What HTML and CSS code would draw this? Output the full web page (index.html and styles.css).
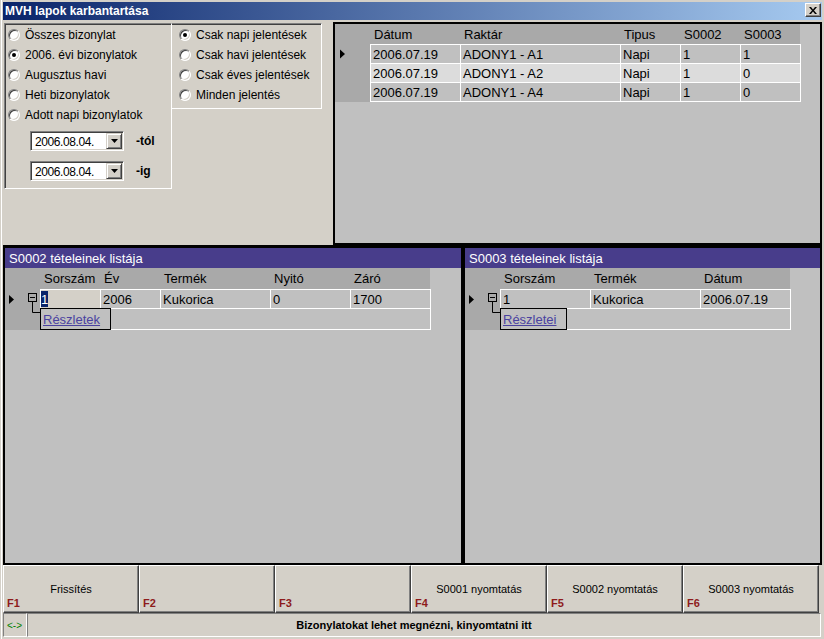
FILE: index.html
```html
<!DOCTYPE html>
<html lang="hu">
<head>
<meta charset="utf-8">
<title>MVH lapok karbantartása</title>
<link rel="stylesheet" href="styles.css">
</head>
<body>
<div class="window">
  <div class="titlebar">
    <span class="title">MVH lapok karbantartása</span>
    <span class="close"><svg width="8" height="7" viewBox="0 0 8 7"><path d="M0 0h2l2 2.5 2-2.5h2l-3 3.5 3 3.5h-2l-2-2.5-2 2.5h-2l3-3.5z" fill="#000"/></svg></span>
  </div>

  <div class="top">
    <div class="filters">
      <div class="group g1">
        <div class="radio"><span class="rb"></span>Összes bizonylat</div>
        <div class="radio"><span class="rb on"></span>2006. évi bizonylatok</div>
        <div class="radio"><span class="rb"></span>Augusztus havi</div>
        <div class="radio"><span class="rb"></span>Heti bizonylatok</div>
        <div class="radio"><span class="rb"></span>Adott napi bizonylatok</div>
        <div class="daterow first">
          <div class="combo"><span class="cv">2006.08.04.</span><span class="dd"><svg width="7" height="4" viewBox="0 0 7 4"><path d="M0 0h7l-3.5 4z" fill="#000"/></svg></span></div>
          <b class="dl">-tól</b>
        </div>
        <div class="daterow">
          <div class="combo"><span class="cv">2006.08.04.</span><span class="dd"><svg width="7" height="4" viewBox="0 0 7 4"><path d="M0 0h7l-3.5 4z" fill="#000"/></svg></span></div>
          <b class="dl">-ig</b>
        </div>
      </div>
      <div class="group g2">
        <div class="radio"><span class="rb on"></span>Csak napi jelentések</div>
        <div class="radio"><span class="rb"></span>Csak havi jelentések</div>
        <div class="radio"><span class="rb"></span>Csak éves jelentések</div>
        <div class="radio"><span class="rb"></span>Minden jelentés</div>
      </div>
    </div>

    <div class="panel main">
      <div class="grid">
        <div class="ghead h20">
          <div class="ind"></div>
          <div class="hc w90">Dátum</div>
          <div class="hc w160">Raktár</div>
          <div class="hc w60">Tipus</div>
          <div class="hc w60">S0002</div>
          <div class="hc w60">S0003</div>
        </div>
        <div class="gbody">
          <div class="ind"><svg width="35" height="58" viewBox="0 0 35 58"><polygon points="5,5.5 10,10 5,14.5" fill="#000"/></svg></div>
          <div class="rows">
            <div class="row">
              <div class="dc w90">2006.07.19</div>
              <div class="dc w160">ADONY1 - A1</div>
              <div class="dc w60">Napi</div>
              <div class="dc w60">1</div>
              <div class="dc w60">1</div>
            </div>
            <div class="row alt">
              <div class="dc w90">2006.07.19</div>
              <div class="dc w160">ADONY1 - A2</div>
              <div class="dc w60">Napi</div>
              <div class="dc w60">1</div>
              <div class="dc w60">0</div>
            </div>
            <div class="row">
              <div class="dc w90">2006.07.19</div>
              <div class="dc w160">ADONY1 - A4</div>
              <div class="dc w60">Napi</div>
              <div class="dc w60">1</div>
              <div class="dc w60">0</div>
            </div>
          </div>
        </div>
      </div>
    </div>
  </div>

  <div class="lower">
    <div class="panel sub left">
      <div class="caption">S0002 tételeinek listája</div>
      <div class="grid">
        <div class="ghead h21">
          <div class="ind"></div>
          <div class="hc w60">Sorszám</div>
          <div class="hc w60">Év</div>
          <div class="hc w110">Termék</div>
          <div class="hc w80">Nyitó</div>
          <div class="hc w80">Záró</div>
        </div>
        <div class="gbody">
          <div class="ind">
            <svg width="35" height="41" viewBox="0 0 35 41">
              <polygon points="4,6 9,10.5 4,15" fill="#000"/>
              <rect x="23.5" y="4.5" width="8" height="8" fill="none" stroke="#000"/>
              <line x1="25" y1="8.5" x2="30" y2="8.5" stroke="#000"/>
              <path d="M27.5 12.5V23.5H35" fill="none" stroke="#000"/>
            </svg>
          </div>
          <div class="rows">
            <div class="row">
              <div class="dc w60 sel"><span class="hl">1</span></div>
              <div class="dc w60">2006</div>
              <div class="dc w110">Kukorica</div>
              <div class="dc w80">0</div>
              <div class="dc w80">1700</div>
            </div>
            <div class="detail">
              <span class="link l1">Részletek</span>
            </div>
          </div>
        </div>
      </div>
    </div>

    <div class="panel sub right">
      <div class="caption">S0003 tételeinek listája</div>
      <div class="grid">
        <div class="ghead h21">
          <div class="ind"></div>
          <div class="hc w90">Sorszám</div>
          <div class="hc w110">Termék</div>
          <div class="hc w90">Dátum</div>
        </div>
        <div class="gbody">
          <div class="ind">
            <svg width="35" height="41" viewBox="0 0 35 41">
              <polygon points="4,6 9,10.5 4,15" fill="#000"/>
              <rect x="23.5" y="4.5" width="8" height="8" fill="none" stroke="#000"/>
              <line x1="25" y1="8.5" x2="30" y2="8.5" stroke="#000"/>
              <path d="M27.5 12.5V23.5H35" fill="none" stroke="#000"/>
            </svg>
          </div>
          <div class="rows">
            <div class="row">
              <div class="dc w90">1</div>
              <div class="dc w110">Kukorica</div>
              <div class="dc w90">2006.07.19</div>
            </div>
            <div class="detail">
              <span class="link l2">Részletei</span>
            </div>
          </div>
        </div>
      </div>
    </div>
  </div>

  <div class="buttons">
    <div class="btn"><span class="lbl">Frissítés</span><span class="fk">F1</span></div>
    <div class="btn"><span class="lbl"></span><span class="fk">F2</span></div>
    <div class="btn"><span class="lbl"></span><span class="fk">F3</span></div>
    <div class="btn"><span class="lbl">S0001 nyomtatás</span><span class="fk">F4</span></div>
    <div class="btn"><span class="lbl">S0002 nyomtatás</span><span class="fk">F5</span></div>
    <div class="btn"><span class="lbl">S0003 nyomtatás</span><span class="fk">F6</span></div>
  </div>

  <div class="status">
    <div class="sc sc1">&lt;-&gt;</div>
    <div class="sc sc2">Bizonylatokat lehet megnézni, kinyomtatni itt</div>
  </div>
</div>
</body>
</html>
```

FILE: styles.css
```css
html, body {
  margin: 0;
  padding: 0;
}
body {
  background: #d4d0c8;
  font-family: "Liberation Sans", Arial, sans-serif;
  color: #000;
  overflow: hidden;
}
.window {
  width: 824px;
  height: 639px;
  box-sizing: border-box;
  padding: 2px 2px 2px 3px;
  display: flex;
  flex-direction: column;
  box-shadow: inset 1px 0 0 #d4d0c8, inset 2px 0 0 #fff;
}

/* title bar */
.titlebar {
  height: 18px;
  flex: none;
  background: linear-gradient(90deg, #0a246a, #a6caf0);
  display: flex;
  align-items: flex-start;
  justify-content: space-between;
  padding: 0 1px 0 2px;
  color: #fff;
  font-weight: bold;
  font-size: 12px;
}
.title {
  line-height: 19px;
}
.close {
  margin-top: 1px;
  width: 16px;
  height: 14px;
  box-sizing: border-box;
  background: #d4d0c8;
  border: 1px solid;
  border-color: #fff #404040 #404040 #fff;
  box-shadow: inset -1px -1px 0 #808080;
  display: flex;
  align-items: center;
  justify-content: center;
}
.close svg { display: block; }

/* top section */
.top {
  height: 224px;
  flex: none;
  margin-top: 1px;
  display: flex;
}
.filters {
  width: 330px;
  flex: none;
  display: flex;
  align-items: flex-start;
  padding: 2px 0 0 1px;
  box-sizing: border-box;
}
.group {
  box-sizing: border-box;
  border-top: 1px solid #808080;
  border-right: 1px solid #fff;
  border-bottom: 1px solid #fff;
}
.g1 {
  width: 168px;
  height: 166px;
  border-left: 1px solid #808080;
  box-shadow: inset 1px 1px 0 #404040;
  padding: 1px 0 0 3px;
}
.g2 {
  width: 150px;
  height: 86px;
  box-shadow: inset 0 1px 0 #404040;
  padding: 1px 0 0 7px;
}
.radio {
  display: flex;
  align-items: center;
  gap: 5px;
  height: 20px;
  font-size: 12px;
  white-space: nowrap;
}
.rb {
  width: 12px;
  height: 12px;
  flex: none;
  box-sizing: border-box;
  border-radius: 50%;
  background: #fff;
  border: 1px solid;
  border-color: #808080 #fff #fff #808080;
  box-shadow: inset 1px 1px 0 #404040, inset -1px -1px 0 #d4d0c8;
  display: flex;
  align-items: center;
  justify-content: center;
}
.rb.on::after {
  content: "";
  width: 4px;
  height: 4px;
  border-radius: 50%;
  background: #000;
}
.daterow {
  display: flex;
  align-items: center;
  gap: 12px;
  padding-left: 22px;
  height: 20px;
  margin-top: 10px;
}
.daterow.first {
  margin-top: 6px;
}
.combo {
  width: 94px;
  height: 20px;
  box-sizing: border-box;
  background: #fff;
  border: 1px solid;
  border-color: #808080 #fff #fff #808080;
  box-shadow: inset 1px 1px 0 #404040, inset -1px -1px 0 #d4d0c8;
  padding: 1px 1px 1px 4px;
  display: flex;
  align-items: center;
  justify-content: space-between;
  font-size: 12px;
}
.cv {
  letter-spacing: -0.4px;
  padding-top: 1px;
}
.dd {
  width: 16px;
  height: 16px;
  box-sizing: border-box;
  background: #d4d0c8;
  border: 1px solid;
  border-color: #d4d0c8 #404040 #404040 #d4d0c8;
  box-shadow: inset 1px 1px 0 #fff, inset -1px -1px 0 #808080;
  display: flex;
  align-items: center;
  justify-content: center;
}
.dd svg { display: block; }
.dl {
  font-size: 12px;
  font-weight: bold;
}

/* panels */
.panel {
  border: 2px solid #000;
  background: #c0c0c0;
  box-sizing: border-box;
}
.main {
  flex: 1;
  margin-top: 1px;
}
.lower {
  height: 320px;
  flex: none;
  display: flex;
}
.sub {
  border-top-width: 3px;
}
.left {
  width: 460px;
  flex: none;
}
.right {
  flex: 1;
}
.caption {
  height: 20px;
  background: #483d8b;
  color: #fff;
  font-size: 13px;
  line-height: 21px;
  padding-left: 4px;
  white-space: nowrap;
}

/* grids */
.grid {
  font-size: 13px;
}
.ghead {
  display: flex;
  width: fit-content;
  background: #a9a9a9;
}
.h20 { height: 20px; line-height: 21px; }
.h21 { height: 21px; line-height: 22px; }
.ind {
  width: 35px;
  flex: none;
}
.ind svg { display: block; }
.gbody {
  display: flex;
}
.gbody .ind {
  background: #a9a9a9;
}
.rows {
  border-top: 1px solid #fff;
  border-right: 1px solid #fff;
}
.row {
  display: flex;
  height: 18px;
  border-bottom: 1px solid #fff;
  background: #c0c0c0;
}
.row.alt {
  background: #dcdcdc;
}
.hc {
  box-sizing: border-box;
  padding-left: 4px;
  white-space: nowrap;
}
.dc {
  box-sizing: border-box;
  height: 18px;
  border-left: 1px solid #fff;
  padding: 1px 0 0 2px;
  line-height: 18px;
  white-space: nowrap;
  overflow: hidden;
}
.w60 { width: 60px; }
.w80 { width: 80px; }
.w90 { width: 90px; }
.w110 { width: 110px; }
.w160 { width: 160px; }
.sel {
  background: #d4d0c8;
  padding-left: 0;
  padding-top: 0;
}
.hl {
  display: inline-block;
  background: #0a246a;
  color: #fff;
  line-height: 17px;
  height: 16px;
  vertical-align: top;
  margin-top: 1px;
}
.detail {
  display: flex;
  align-items: flex-start;
  height: 20px;
  border-bottom: 1px solid #fff;
}
.link {
  position: relative;
  height: 20px;
  margin: -1px 0;
  border: 1px solid #000;
  padding: 0 0 0 2px;
  line-height: 21px;
  color: #4a42a0;
  text-decoration: underline;
  box-sizing: content-box;
  white-space: nowrap;
}
.l1 { width: 67px; }
.l2 { width: 63px; }

/* buttons */
.buttons {
  height: 48px;
  flex: none;
  display: flex;
}
.btn {
  width: 136px;
  box-sizing: border-box;
  border: 1px solid;
  border-color: #fff #404040 #404040 #fff;
  box-shadow: inset -1px -1px 0 #808080;
  display: grid;
  grid-template-rows: 1fr auto 1fr;
  font-size: 11px;
}
.lbl {
  grid-row: 2;
  text-align: center;
  min-height: 13px;
  line-height: 13px;
}
.fk {
  grid-row: 3;
  align-self: end;
  padding: 0 0 2px 3px;
  font-weight: bold;
  font-size: 11px;
  line-height: 13px;
  color: #8e1b1b;
}

/* status bar */
.status {
  height: 24px;
  flex: none;
  display: flex;
  margin-right: 1px;
  font-size: 11px;
}
.sc {
  box-sizing: border-box;
  border: 1px solid;
  border-color: #808080 #fff #fff #808080;
  display: flex;
  align-items: center;
  white-space: nowrap;
}
.sc1 {
  width: 24px;
  flex: none;
  padding-left: 3px;
  color: #008000;
  font-size: 10px;
}
.sc2 {
  flex: 1;
  justify-content: center;
  padding-right: 20px;
  font-weight: bold;
}
```
